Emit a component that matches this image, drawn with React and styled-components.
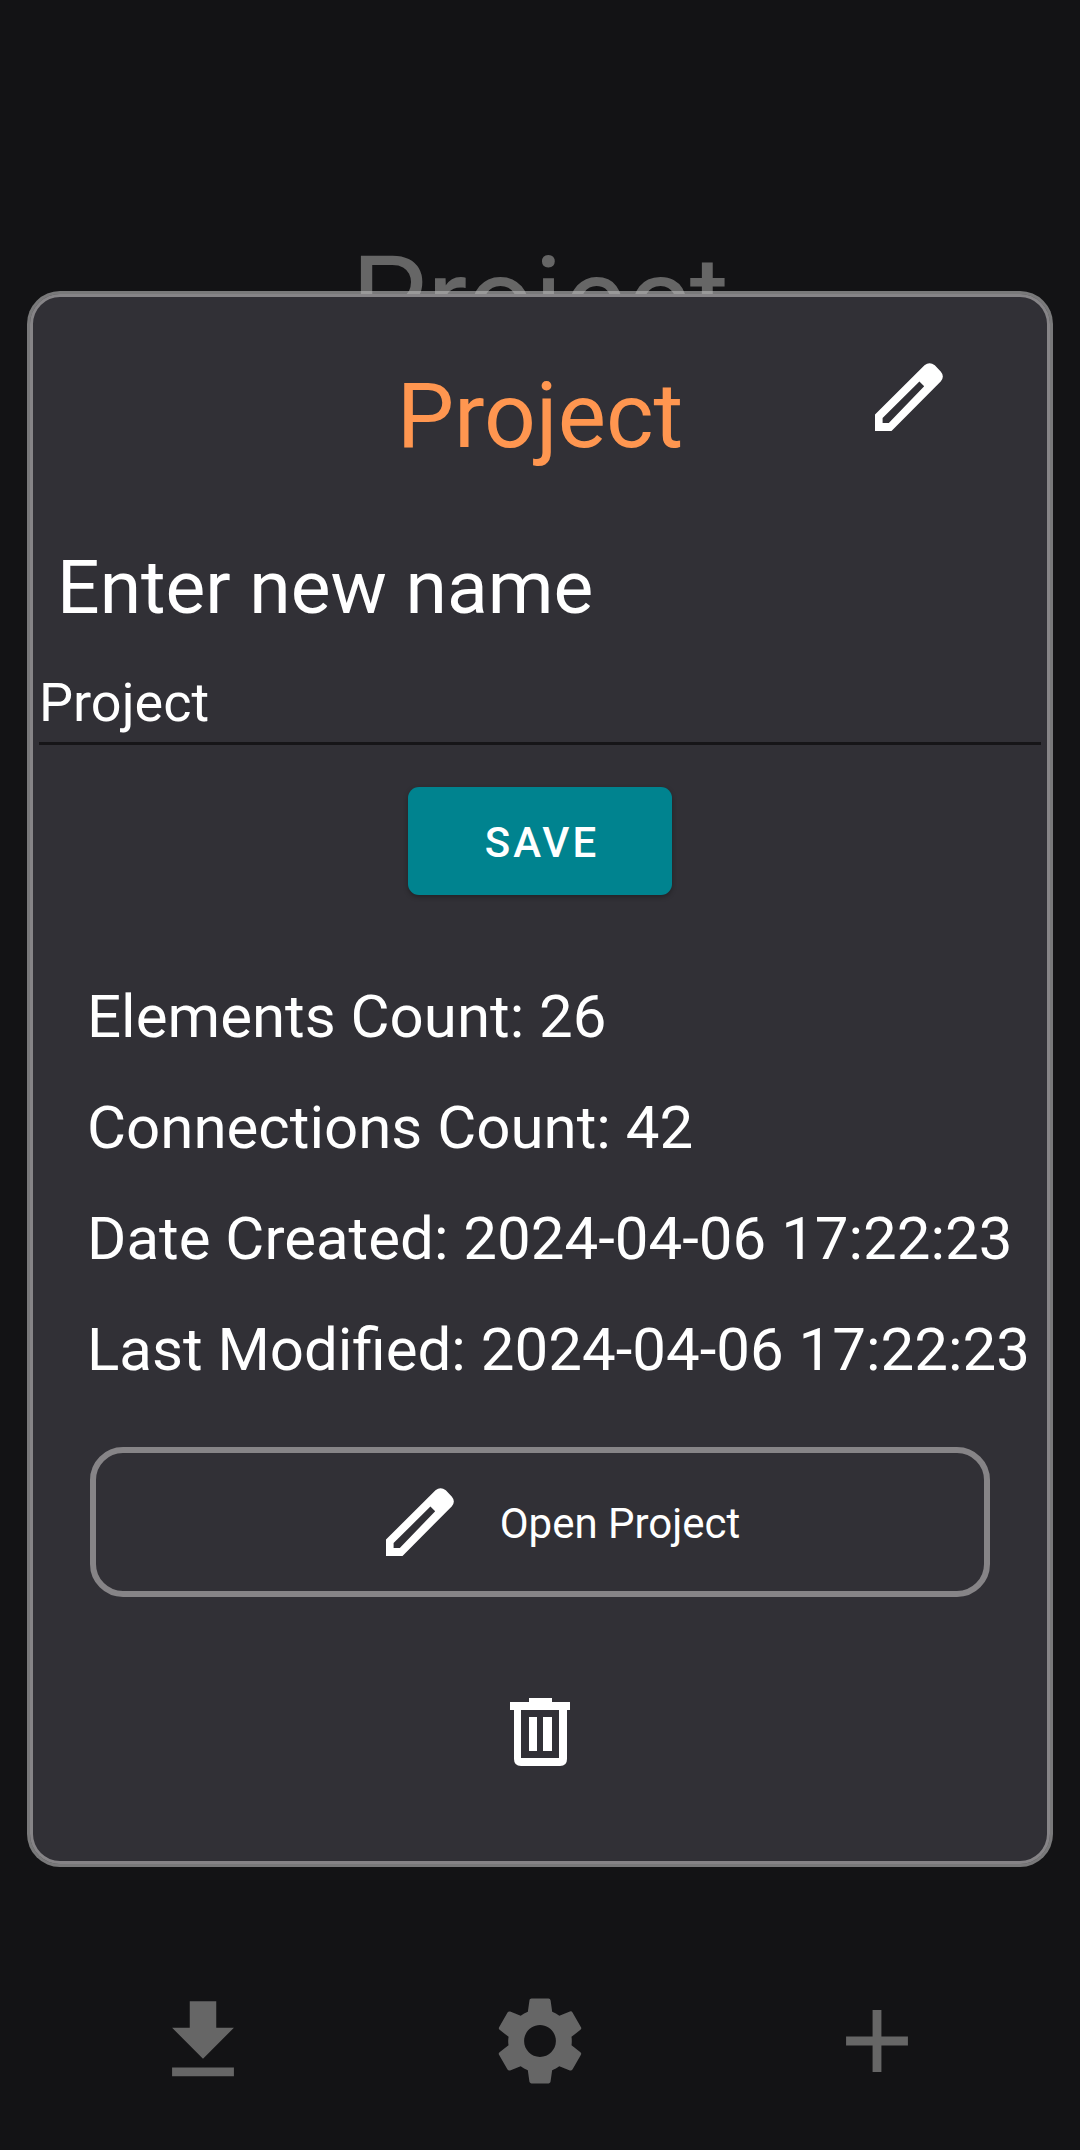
import React, { useState } from "react";
import styled, { createGlobalStyle } from "styled-components";
import { MdAdd, MdDownload, MdSettings } from "react-icons/md";

const GlobalStyle = createGlobalStyle`
  *, *::before, *::after {
    box-sizing: border-box;
  }

  body {
    margin: 0;
    background: #131315;
    color: #ffffff;
    font-family: Roboto, "Liberation Sans", sans-serif;
  }
`;

const Screen = styled.div`
  position: relative;
  display: flex;
  flex-direction: column;
  justify-content: space-between;
  min-height: 100vh;
`;

const ScreenTitle = styled.h1`
  margin: 0;
  padding-top: 230px;
  color: #666666;
  font-size: 120px;
  font-weight: 400;
  line-height: 142px;
  text-align: center;
`;

const BottomBar = styled.nav`
  display: grid;
  grid-template-columns: repeat(3, 1fr);
  justify-items: center;
  padding: 0 34px 56px;
`;

const IconButton = styled.button`
  display: flex;
  padding: 0;
  border: 0;
  background: none;
  color: ${({ $muted }) => ($muted ? "#666666" : "#ffffff")};
  cursor: pointer;
`;

const Overlay = styled.div`
  position: absolute;
  inset: 0;
  display: flex;
  align-items: flex-start;
  padding: 291px 27px 0;
`;

const Dialog = styled.section`
  flex: 1;
  display: flex;
  flex-direction: column;
  min-width: 0;
  padding: 69px 3px 98px;
  border: 3px solid rgba(187, 187, 187, 0.61);
  border-radius: 33px;
  background: #313036;
  background-clip: padding-box;
  box-shadow: inset 0 0 0 3px #868487;
`;

const DialogHeader = styled.header`
  display: grid;
  grid-template-columns: 1fr auto 1fr;
  align-items: start;
  padding-right: 104px;
  padding-left: 104px;
`;

const DialogTitle = styled.h2`
  grid-column: 2;
  margin: 0;
  color: #ff9650;
  font-size: 91px;
  font-weight: 400;
  line-height: 106px;
`;

const HeaderAction = styled.div`
  justify-self: end;
`;

const RenameForm = styled.form`
  display: flex;
  flex-direction: column;
  padding: 74px 6px 0;
`;

const NameLabel = styled.label`
  padding-left: 18px;
  font-size: 75px;
  line-height: 88px;
`;

const NameInput = styled.input`
  width: 100%;
  height: 75px;
  margin: 39px 0 42px;
  padding: 0 0 8px;
  border: 0;
  border-bottom: 3px solid #161518;
  border-radius: 0;
  outline: 0;
  background: none;
  color: inherit;
  font: inherit;
  font-size: 54px;
  line-height: 64px;
`;

const SaveButton = styled.button`
  align-self: center;
  width: 264px;
  height: 108px;
  padding: 2px 0 0 4px;
  border: 0;
  border-radius: 11px;
  background: #00838f;
  box-shadow: 0 2px 5px rgba(0, 0, 0, 0.3);
  color: #ffffff;
  font: inherit;
  font-size: 42px;
  font-weight: 500;
  letter-spacing: 3px;
  cursor: pointer;
`;

const Facts = styled.ul`
  display: flex;
  flex-direction: column;
  gap: 40px;
  margin: 0;
  padding: 86px 0 62px 54px;
  font-size: 60px;
  line-height: 71px;
  list-style: none;
  white-space: nowrap;
`;

const OpenButton = styled.button`
  display: flex;
  align-items: center;
  justify-content: center;
  gap: 46px;
  height: 150px;
  margin: 0 57px 101px;
  padding: 0 0 0 46px;
  border: 6px solid #868487;
  border-radius: 33px;
  background: none;
  color: #ffffff;
  font: inherit;
  font-size: 42px;
  line-height: 48px;
  cursor: pointer;
`;

const OpenLabel = styled.span`
  padding-top: 4px;
`;

const DeleteRow = styled.div`
  display: flex;
  justify-content: center;
`;

function PencilIcon() {
  return (
    <svg width="68" height="68" viewBox="0 0 68 68" fill="currentColor" aria-hidden="true">
      <path
        fillRule="evenodd"
        d="M0 68V51.5L49.5 2.3Q54.5-1.8 59.8 2.3L65.7 8.4Q70 13.4 65.7 18.4L16.5 68ZM7.6 55V60H13.8L49.2 23.2L44.4 18.6Z"
      />
    </svg>
  );
}

function TrashIcon() {
  return (
    <svg width="60" height="68" viewBox="0 0 60 68" fill="currentColor" aria-hidden="true">
      <path
        fillRule="evenodd"
        d="M19 0H42V4H60V12H57V61Q57 68 50 68H11Q4 68 4 61V12H0V4H19ZM11 12V60H49V12ZM19 19H27V53H19ZM33 19H42V53H33Z"
      />
    </svg>
  );
}

const facts = [
  ["Elements Count", "26"],
  ["Connections Count", "42"],
  ["Date Created", "2024-04-06 17:22:23"],
  ["Last Modified", "2024-04-06 17:22:23"],
];

export default function App() {
  const [name, setName] = useState("Project");

  return (
    <Screen>
      <GlobalStyle />
      <ScreenTitle>Project</ScreenTitle>
      <BottomBar>
        <IconButton $muted type="button" aria-label="Download">
          <MdDownload size={106} />
        </IconButton>
        <IconButton $muted type="button" aria-label="Settings">
          <MdSettings size={106} />
        </IconButton>
        <IconButton $muted type="button" aria-label="Add">
          <MdAdd size={106} />
        </IconButton>
      </BottomBar>

      <Overlay>
        <Dialog role="dialog" aria-labelledby="dialog-title">
          <DialogHeader>
            <DialogTitle id="dialog-title">Project</DialogTitle>
            <HeaderAction>
              <IconButton type="button" aria-label="Rename">
                <PencilIcon />
              </IconButton>
            </HeaderAction>
          </DialogHeader>

          <RenameForm onSubmit={(event) => event.preventDefault()}>
            <NameLabel htmlFor="project-name">Enter new name</NameLabel>
            <NameInput
              id="project-name"
              type="text"
              value={name}
              onChange={(event) => setName(event.target.value)}
            />
            <SaveButton type="submit">SAVE</SaveButton>
          </RenameForm>

          <Facts>
            {facts.map(([label, value]) => (
              <li key={label}>{`${label}: ${value}`}</li>
            ))}
          </Facts>

          <OpenButton type="button">
            <PencilIcon />
            <OpenLabel>Open Project</OpenLabel>
          </OpenButton>

          <DeleteRow>
            <IconButton type="button" aria-label="Delete">
              <TrashIcon />
            </IconButton>
          </DeleteRow>
        </Dialog>
      </Overlay>
    </Screen>
  );
}
